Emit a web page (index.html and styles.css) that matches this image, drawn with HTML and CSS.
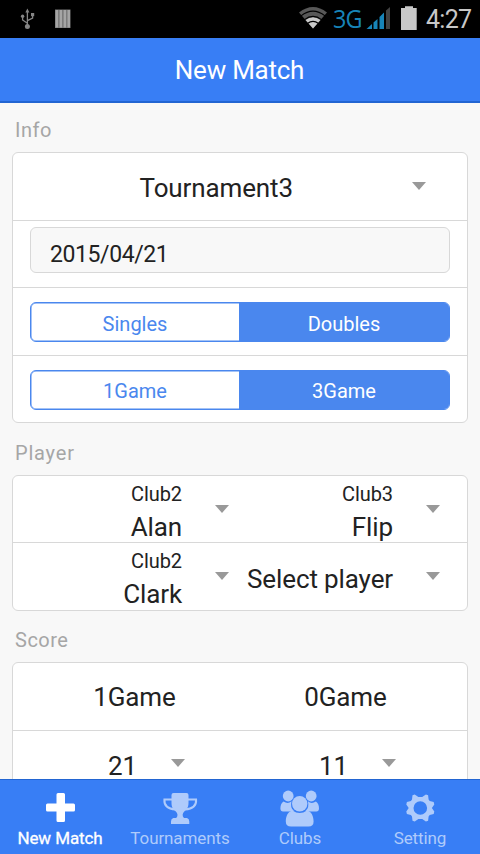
FILE: index.html
```html
<!DOCTYPE html>
<html lang="en">
<head>
<meta charset="utf-8">
<title>New Match</title>
<link rel="stylesheet" href="styles.css">
</head>
<body>
<div class="app">
  <div class="status">
    <svg class="status-left" width="80" height="38" viewBox="0 0 80 38">
      <g fill="none" stroke="#858585" stroke-width="1.3">
        <path d="M27.4 11V26M27.4 23.2L22.6 20V16.5M27.4 20.6L32.6 18V14"/>
      </g>
      <g fill="#858585">
        <path d="M27.4 8.6L29.4 12.6H25.4Z"/>
        <circle cx="27.4" cy="26.5" r="2.5"/>
        <circle cx="22.6" cy="16.2" r="1.7"/>
        <rect x="31" y="13" width="3.2" height="3.2"/>
      </g>
      <rect x="55" y="9.5" width="15.5" height="18.5" fill="#777"/>
      <g fill="#a5a5a5"><rect x="55.6" y="10" width="2.5" height="17.5"/><rect x="59.6" y="10" width="2.5" height="17.5"/><rect x="63.6" y="10" width="2.5" height="17.5"/><rect x="67.5" y="10" width="2.5" height="17.5"/></g>
    </svg>
    <div class="status-right">
      <svg width="30" height="38" viewBox="298 0 30 38">
        <path d="M299 12.6Q313 1.6 327 12.6L313 28.5Z" fill="#585858"/>
        <path d="M305.5 20Q313 14.5 320.500 20L313 28.5Z" fill="#cacaca"/>
        <g fill="none" stroke="#000" stroke-width="1.2"><path d="M301 15.900Q313 6.500 325 15.900"/><path d="M304.500 19.600Q313 13 321.500 19.600"/><path d="M307.500 23.400Q313 19.200 318.500 23.400"/></g>
      </svg>
      <span class="net">3G</span>
      <svg width="26" height="38" viewBox="366 0 26 38">
        <g fill="#1784b8"><path d="M366.500 29L372 24V29Z"/><path d="M373.500 22.500L377.500 19V29H373.500Z"/></g>
        <path d="M379.500 17L384 12.500V29H379.500Z" fill="#1784b8"/>
        <path d="M386 10.500L390 7V29H386Z" fill="#424242"/>
      </svg>
      <svg class="battery" width="16" height="38" viewBox="401 0 16 38"><path d="M401 8H405V6.300H413V8H416.700V30H401Z" fill="#c8c8c8"/></svg>
      <span class="clock">4:27</span>
    </div>
  </div>
  <header class="header">New Match</header>
  <main class="content">
    <h2 class="label label-info">Info</h2>
    <section class="card">
      <div class="row row-tournament"><span class="big tournament">Tournament3</span><i class="arrow"></i></div>
      <div class="row row-date"><div class="date">2015/04/21</div></div>
      <div class="row row-seg"><div class="seg"><span>Singles</span><span class="on">Doubles</span></div></div>
      <div class="row row-seg2"><div class="seg"><span>1Game</span><span class="on">3Game</span></div></div>
    </section>
    <h2 class="label label-player">Player</h2>
    <section class="card">
      <div class="row pair">
        <div class="player"><div class="who"><small>Club2</small><span class="big">Alan</span></div><i class="arrow"></i></div>
        <div class="player"><div class="who"><small>Club3</small><span class="big">Flip</span></div><i class="arrow"></i></div>
      </div>
      <div class="row pair second">
        <div class="player"><div class="who"><small>Club2</small><span class="big">Clark</span></div><i class="arrow"></i></div>
        <div class="player"><div class="who single"><span class="big select">Select player</span></div><i class="arrow"></i></div>
      </div>
    </section>
    <h2 class="label label-score">Score</h2>
    <section class="card">
      <div class="row pair games"><span class="big">1Game</span><span class="big">0Game</span></div>
      <div class="row pair">
        <div class="points"><span class="big">21</span><i class="arrow"></i></div>
        <div class="points"><span class="big">11</span><i class="arrow"></i></div>
      </div>
    </section>
  </main>
  <nav class="tabs">
    <a class="tab active">
      <svg width="48" height="44" viewBox="36 780 48 44"><path fill="currentColor" d="M58 793H63.500Q65 793 65 794.500V803.500H73.500Q75 803.500 75 805V810Q75 811.500 73.500 811.500H65V820.500Q65 822 63.500 822H58Q56.500 822 56.500 820.500V811.500H47.500Q46 811.500 46 810V805Q46 803.500 47.500 803.500H56.500V794.500Q56.500 793 58 793Z"/></svg>
      <span class="t1">New Match</span>
    </a>
    <a class="tab">
      <svg width="48" height="44" viewBox="156 780 48 44">
        <path fill="currentColor" d="M171.500 795Q171.500 793 173.500 793H186.500Q188.500 793 188.500 795V803C188.500 807.500 186.500 809.500 184.300 811.500C182.300 813.500 182 816 184 818H187Q189.300 818.500 189.300 821.500V824H171V821.500Q171 818.500 173.300 818H176.200C178.200 816 177.800 813.500 175.800 811.500C173.500 809.500 171.500 807.500 171.500 803Z"/>
        <path fill="none" stroke="currentColor" stroke-width="2" d="M172.500 799.500H164.400Q163.700 808.500 175.500 809.500M187.800 799.500H196.100Q196.800 808.500 185 809.500"/>
      </svg>
      <span class="t2">Tournaments</span>
    </a>
    <a class="tab">
      <svg width="48" height="44" viewBox="276 780 48 44">
        <g fill="currentColor">
          <circle cx="288.200" cy="796" r="5.400"/><circle cx="311.200" cy="796" r="5.400"/>
          <path d="M283.500 801.500Q288 804.500 291.500 801.200Q289.800 808 294 810.800L289 811.500H283Q280.500 811.500 280.400 808.500Q280.400 803.500 283.500 801.500ZM315.900 801.500Q311.400 804.500 307.900 801.200Q309.600 808 305.400 810.800L310.400 811.500H316.400Q318.900 811.500 319 808.500Q319 803.500 315.900 801.500Z"/>
          <circle cx="299.700" cy="803.700" r="7.700"/>
          <path d="M292.500 810.500Q299.700 815.500 306.900 810.500C311.500 811 313.600 816.500 313.600 821.500Q313.600 826.500 308.500 826.500H291Q285.800 826.500 285.800 821.500C285.800 816.500 288 811 292.500 810.500Z"/>
        </g>
      </svg>
      <span class="t3">Clubs</span>
    </a>
    <a class="tab">
      <svg width="48" height="44" viewBox="396 780 48 44">
        <g transform="translate(420.300 808)">
          <path fill="currentColor" fill-rule="evenodd" d="M-5.600 -13.500L-1.900 -10.900H1.900L5.600 -13.500L7.800 -12.700L8.300 -8.500L9.400 -7L13.400 -6L14 -3.500L11.600 0L14 3.500L13.400 6L9.400 7L8.300 8.500L7.800 12.700L5.600 13.500L1.900 10.900H-1.900L-5.600 13.500L-7.800 12.700L-8.300 8.500L-9.400 7L-13.400 6L-14 3.500L-11.600 0L-14 -3.500L-13.400 -6L-9.400 -7L-8.300 -8.500L-7.800 -12.700ZM0 -6.800A6.800 6.800 0 1 0 0 6.800A6.800 6.800 0 1 0 0 -6.800Z"/>
        </g>
      </svg>
      <span class="t4">Setting</span>
    </a>
  </nav>
</div>
</body>
</html>
```
FILE: styles.css
```css
* { box-sizing: border-box; }
body { margin: 0; font-family: Roboto, "Noto Sans", sans-serif; background: #f8f8f8; color: #222; }
svg { display: block; overflow: visible; flex: none; }
.app { width: 480px; height: 854px; display: flex; flex-direction: column; overflow: hidden; }

.status { height: 38px; flex: none; background: #000; display: flex; justify-content: space-between; }
.status-right { display: flex; padding-right: 9px; line-height: 38px; }
.net { width: 38px; padding-left: 5px; color: #1784b8; font: 26px/36px "Open Sans", sans-serif; letter-spacing: -1px; transform: scaleX(.9); transform-origin: 5px 0; }
.battery { margin-left: 9px; }
.clock { width: 45px; margin-left: 9px; color: #c8c8c8; font-size: 25px; line-height: 40px; letter-spacing: -.7px; }

.header { height: 65px; flex: none; background: #387ef5; border-bottom: 2px solid #2265d2; color: #fff; font-size: 26px; line-height: 64px; letter-spacing: -.25px; padding-right: 1px; text-align: center; }

.content { flex: 1; min-height: 0; overflow: hidden; padding: 0 12px; }
.label { margin: 0; height: 51px; padding: 0 3px; font-size: 20px; font-weight: 400; line-height: 59px; letter-spacing: .5px; color: #a6a6a6; }
.label-info { height: 49px; line-height: 54px; }
.label-player { height: 52px; line-height: 60px; letter-spacing: .8px; }
.card { background: #fff; border: 1px solid #d8d8d8; border-radius: 6px; }
.row { height: 67px; padding: 0 17px; border-bottom: 1px solid #d8d8d8; }
.row:last-child { border-bottom: 0; }
.big { font-size: 26px; line-height: 32px; letter-spacing: -.12px; white-space: nowrap; }
.arrow { flex: none; width: 0; height: 0; border: 7.5px solid transparent; border-top: 8px solid #999; border-bottom: 0; }

.row-tournament { height: 68px; display: flex; align-items: center; justify-content: space-between; padding: 3px 41px 0 126.5px; }
.row-tournament .arrow { margin-bottom: 5px; }
.row-date { padding-top: 6px; }
.date { height: 46px; padding-left: 19px; background: #f8f8f8; border: 1px solid #d8d8d8; border-radius: 6px; font-size: 23px; line-height: 53px; letter-spacing: -.4px; }
.row-seg { height: 68px; padding-top: 14px; }
.row-seg2 { height: 66px; padding-top: 14px; }
.seg { height: 40px; display: grid; grid-template-columns: 208px 1fr; border: 1px solid #4a87ee; border-radius: 6px; box-shadow: inset 0 0 0 .5px #4a87ee; overflow: hidden; color: #4a87ee; font-size: 20px; line-height: 41px; text-align: center; }
.seg .on { background: #4a87ee; color: #fff; }
.row-seg .seg { line-height: 43px; }

.pair { display: grid; grid-template-columns: 211px 211px; padding: 0 16px; }
.second { height: 67px; }
.player { display: flex; align-items: center; }
.who { width: 153px; margin-right: 33px; padding-top: 2px; display: flex; flex-direction: column; align-items: flex-end; }
.who small { font-size: 20px; line-height: 32px; letter-spacing: -.1px; }
.who .big { line-height: 35px; }
.who .select { line-height: 32px; padding-top: 1px; }
.player .arrow { margin-bottom: 3px; }
.games { height: 68px; align-items: center; text-align: center; }
.points { display: flex; align-items: center; padding: 3px 0 0 79px; }
.points .big { width: 28px; margin-right: 35px; }
.points .arrow { margin-bottom: 6px; }

.tabs { height: 75px; flex: none; background: #387ef5; border-top: 1px solid #2265d2; display: grid; grid-template-columns: repeat(4, 1fr); }
.tab { display: flex; flex-direction: column; align-items: center; color: #afcbfb; font-size: 17px; line-height: 28px; letter-spacing: -.1px; }
.tab svg { height: 44px; }
.active { color: #fff; -webkit-text-stroke: .3px #fff; }
```
